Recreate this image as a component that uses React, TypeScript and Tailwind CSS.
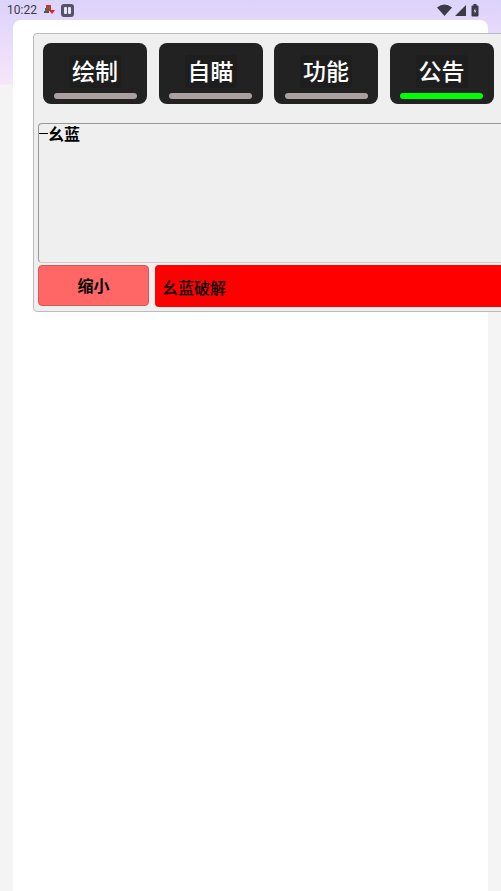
import * as React from "react";

const tabs = [
  { label: "绘制", active: false },
  { label: "自瞄", active: false },
  { label: "功能", active: false },
  { label: "公告", active: true },
];

function StatusBar() {
  return (
    <div className="flex h-[20px] items-center justify-between pl-[7px] pr-[22px] text-[12px] text-[#3c3a44]">
      <div className="flex items-center gap-[6px]">
        <span className="font-['Roboto',sans-serif]">10:22</span>
        <svg width="12" height="10" viewBox="0 0 12 10">
          <rect x="3" y="0" width="5" height="3" fill="#c0392b" />
          <rect x="2" y="3" width="6" height="3" fill="#7a5a3a" />
          <path d="M6 5 L12 5 L9 9 Z" fill="#e02020" />
          <rect x="1" y="6" width="5" height="2" fill="#555" />
        </svg>
        <svg width="13" height="13" viewBox="0 0 13 13">
          <rect x="0" y="0" width="13" height="13" rx="3" fill="#55536a" />
          <rect x="3" y="3" width="3" height="7" rx="1" fill="#e8e4f4" />
          <rect x="7" y="3" width="3" height="7" rx="1" fill="#e8e4f4" />
        </svg>
      </div>
      <div className="flex items-center gap-[3px]">
        <svg width="15" height="12" viewBox="0 0 15 12">
          <path d="M0 3.5 Q7.5 -2.5 15 3.5 L7.5 12 Z" fill="#3c3a44" />
        </svg>
        <svg width="11" height="11" viewBox="0 0 11 11">
          <path d="M11 0 L11 11 L0 11 Z" fill="#3c3a44" />
        </svg>
        <svg width="8" height="13" viewBox="0 0 8 13" className="ml-[2px]">
          <rect x="2.5" y="0" width="3" height="2" fill="#3c3a44" />
          <rect x="0.5" y="1.5" width="7" height="11" rx="1" fill="#3c3a44" />
          <path d="M4.5 4 L2.5 7.5 L4 7.5 L3.5 10 L5.5 6.5 L4 6.5 Z" fill="#dcd3fb" />
        </svg>
      </div>
    </div>
  );
}

function Tab({ label, active }: { label: string; active: boolean }) {
  return (
    <div className="flex h-[61px] w-[104px] shrink-0 flex-col items-center rounded-[8px] bg-[#222222] pt-[12px]">
      <div className="flex h-[33px] items-center rounded-[4px] bg-[#1e1e1e] px-[3px] pb-[3px] text-[23px] font-medium leading-none text-white">
        {label}
      </div>
      <div
        className={
          active
            ? "mt-[5px] h-[6px] w-[83px] rounded-full bg-[#00ff00]"
            : "mt-[5px] h-[6px] w-[83px] rounded-full bg-[#a9a0a0]"
        }
      />
    </div>
  );
}

export default function App() {
  return (
    <div className="h-[891px] w-[501px] overflow-hidden bg-[linear-gradient(to_bottom,#dcd3fb_0px,#f7e6f8_84px,#f4f4f4_85px)] font-['Noto_Sans_CJK_SC','Noto_Sans',sans-serif]">
      <StatusBar />
      <div className="mx-[13px] h-[871px] rounded-t-[8px] bg-white pl-[20px] pt-[13px]">
        <div className="w-[490px] rounded-[4px] border border-[#bbbbbb] bg-[#efefef] px-[4px] pb-[4px] pt-[9px]">
          <div className="flex gap-[11.5px] pl-[5px]">
            {tabs.map((t) => (
              <Tab key={t.label} label={t.label} active={t.active} />
            ))}
          </div>
          <div className="mt-[19px] h-[140px] rounded-[4px] border border-[#999999] border-b-[#cccccc] bg-[#efefef]">
            <div className="flex items-center">
              <span className="h-px w-[9px] bg-black" />
              <span className="text-[16px] font-semibold leading-[18px] text-black">幺蓝</span>
            </div>
          </div>
          <div className="mt-[2px] flex gap-[6px]">
            <div className="flex h-[41px] w-[111px] items-center justify-center rounded-[4px] border border-[#d85858] bg-[#ff6666] pb-[2px] text-[16px] font-semibold text-black">
              缩小
            </div>
            <div className="flex h-[42px] flex-1 items-center rounded-[4px] bg-[#ff0000] pl-[7px] pt-[2px] text-[16px] font-medium text-black">
              幺蓝破解
            </div>
          </div>
        </div>
      </div>
    </div>
  );
}
